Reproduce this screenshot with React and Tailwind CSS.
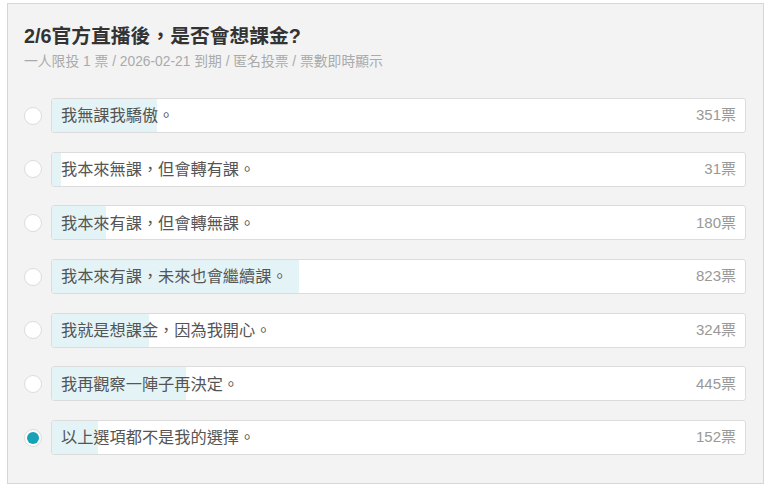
import React from "react";

const options = [
  { label: "我無課我驕傲。", votes: 351 },
  { label: "我本來無課，但會轉有課。", votes: 31 },
  { label: "我本來有課，但會轉無課。", votes: 180 },
  { label: "我本來有課，未來也會繼續課。", votes: 823 },
  { label: "我就是想課金，因為我開心。", votes: 324 },
  { label: "我再觀察一陣子再決定。", votes: 445 },
  { label: "以上選項都不是我的選擇。", votes: 152, selected: true },
];

const total = options.reduce((s, o) => s + o.votes, 0);

export default function App() {
  return (
    <div
      className="w-[777px] h-[494px] bg-white pt-[3px] pl-[7px]"
      style={{ fontFamily: '"Liberation Sans", "Noto Sans CJK TC", sans-serif' }}
    >
      <div className="w-[757px] h-[481px] border border-[#d6d6d6] bg-[#f3f3f3] pt-[20px] pl-[16px] pr-[16px]">
        <div className="text-[19.8px] leading-[24px] font-bold text-[#333]">
          2/6官方直播後，是否會想課金?
        </div>
        <div className="mt-[5px] text-[13.8px] leading-[18px] text-[#aaa]">
          一人限投 1 票 / 2026-02-21 到期 / 匿名投票 / 票數即時顯示
        </div>
        <div className="mt-[27px] flex flex-col gap-[18.7px]">
          {options.map((o, i) => (
            <div key={i} className="flex items-center">
              <div className="w-[18px] h-[18px] rounded-full bg-white border border-[#dcdcdc] flex items-center justify-center shrink-0">
                {o.selected && <div className="w-[12px] h-[12px] rounded-full bg-[#17a2b8]" />}
              </div>
              <div className="ml-[9px] relative w-[695px] h-[35px] bg-white border border-[#dcdcdc] rounded-[3px] overflow-hidden flex items-center justify-between px-[9px]">
                <div
                  className="absolute left-0 top-0 bottom-0 bg-[#e4f4f6]"
                  style={{ width: `${(o.votes / total) * 100}%` }}
                />
                <span className="relative text-[16.2px] text-[#555]">{o.label}</span>
                <span className="relative text-[15px] text-[#999]">{o.votes}票</span>
              </div>
            </div>
          ))}
        </div>
      </div>
    </div>
  );
}
